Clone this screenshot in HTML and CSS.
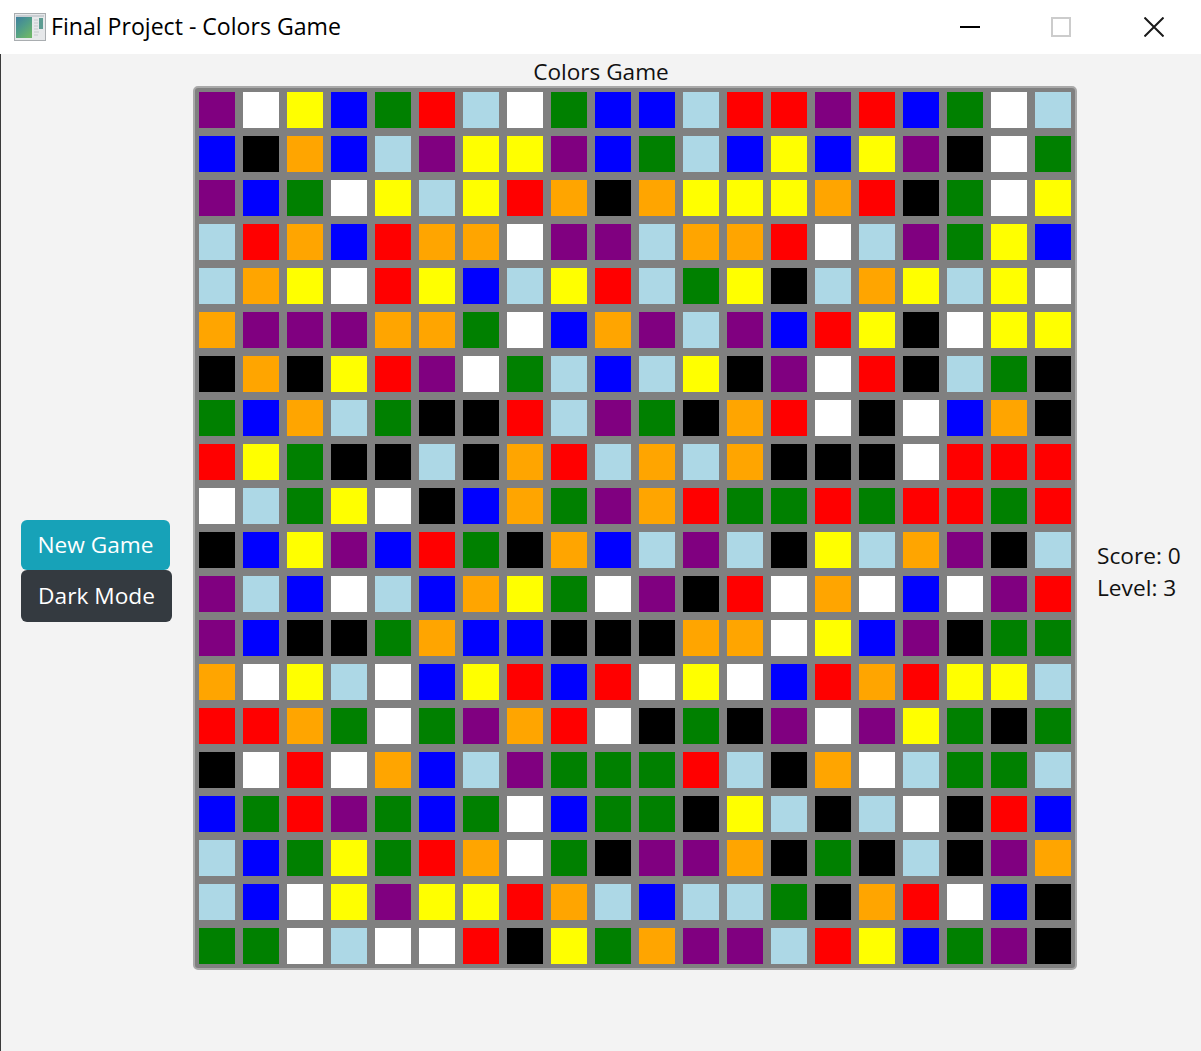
FILE: index.html
```html
<!DOCTYPE html>
<html>
<head>
    <title>Final Project - Colors Game</title>
    <link rel="stylesheet" href="styles.css">
</head>
<body>
    <div class="titlebar">
        <svg class="app-icon" width="32" height="28" viewBox="0 0 32 28">
            <rect x="0.5" y="0.5" width="31" height="27" fill="#e6e8ea" stroke="#a9adb0"/>
            <rect x="2" y="2" width="28" height="2" fill="#c9ced2"/>
            <defs>
                <linearGradient id="pane" x1="0" y1="0" x2="0.7" y2="1">
                    <stop offset="0" stop-color="#3f7f9e"/>
                    <stop offset="0.5" stop-color="#4f9c8a"/>
                    <stop offset="1" stop-color="#6cb56a"/>
                </linearGradient>
            </defs>
            <rect x="2" y="4" width="16" height="21" fill="url(#pane)"/>
            <rect x="25" y="5" width="4" height="11" fill="#5d9c92"/>
            <path d="M20 7h4M20 10h4M20 13h4M20 16h4M20 19h5M20 22h4" stroke="#c4c8cb" stroke-width="1"/>
        </svg>
        <span class="window-title">Final Project - Colors Game</span>
        <div class="window-controls">
            <svg class="ctl ctl-min" width="20" height="20" viewBox="0 0 20 20"><path d="M0 10h20" stroke="#000" stroke-width="2"/></svg>
            <svg class="ctl ctl-max" width="20" height="20" viewBox="0 0 20 20"><rect x="1" y="1" width="18" height="18" fill="none" stroke="#cccccc" stroke-width="2"/></svg>
            <svg class="ctl ctl-close" width="20" height="20" viewBox="0 0 20 20"><path d="M0.5 0.5L19.5 19.5M19.5 0.5L0.5 19.5" stroke="#1a1a1a" stroke-width="2"/></svg>
        </div>
    </div>

    <div class="content">
        <div class="game-title">Colors Game</div>
        <div class="game-row">
            <div class="side-buttons">
                <button type="button" class="btn btn-info">New Game</button>
                <button type="button" class="btn btn-dark">Dark Mode</button>
            </div>
            <div class="board" id="board"></div>
            <div class="stats">
                <div>Score: 0</div>
                <div>Level: 3</div>
            </div>
        </div>
    </div>

    <script src="board.js"></script>
</body>
</html>
```

FILE: styles.css
```css
html, body {
    margin: 0;
    padding: 0;
}

body {
    width: 1201px;
    height: 1051px;
    overflow: hidden;
    font-family: "Open Sans", "Noto Sans", sans-serif;
    color: #111;
    background-color: #f3f3f3;
}

.titlebar {
    display: flex;
    align-items: center;
    height: 54px;
    padding-left: 14px;
    background-color: #fff;
}

.app-icon {
    margin-right: 5px;
}

.window-title {
    font-size: 23.1px;
    color: #000;
    padding-bottom: 2px;
}

.window-controls {
    display: flex;
    align-items: center;
    margin-left: auto;
    margin-right: 37px;
    gap: 71px;
}

.ctl {
    display: block;
}

.ctl-close {
    margin-left: 2px;
}

.content {
    height: 997px;
    border-left: 1px solid #3a3a3a;
}

.game-title {
    height: 32px;
    line-height: 36px;
    text-align: center;
    font-size: 22.6px;
}

.game-row {
    display: flex;
    align-items: flex-start;
}

.side-buttons {
    display: flex;
    flex-direction: column;
    align-items: flex-start;
    box-sizing: border-box;
    width: 192px;
    padding-left: 20px;
    padding-top: 434px;
}

.btn {
    border: none;
    border-radius: 6px;
    color: #fff;
    font-family: inherit;
    font-size: 22.7px;
    padding: 0;
}

.btn-info {
    width: 149px;
    height: 50px;
    padding-bottom: 2px;
    background-color: #17a2b8;
}

.btn-dark {
    width: 151px;
    height: 52px;
    padding-bottom: 2px;
    background-color: #343a40;
}

.board {
    display: grid;
    grid-template-columns: repeat(20, 36px);
    grid-auto-rows: 36px;
    gap: 8px;
    padding: 4px;
    background-color: #808080;
    border: 2px solid #a9a9a9;
    border-radius: 5px;
}

.stats {
    padding-left: 20px;
    padding-top: 454px;
    font-size: 22.7px;
    line-height: 32px;
}

.c-purple { background-color: #800080; }
.c-white { background-color: #fff; }
.c-yellow { background-color: #ff0; }
.c-blue { background-color: #00f; }
.c-green { background-color: #008000; }
.c-red { background-color: #f00; }
.c-lightblue { background-color: #add8e6; }
.c-orange { background-color: #ffa500; }
.c-black { background-color: #000; }
```

FILE: board.js
```js
// one string per row, one letter per cell
var rows = [
    "PWYBGRLWGBBLRRPRBGWL",
    "BKOBLPYYPBGLBYBYPKWG",
    "PBGWYLYROKOYYYORKGWY",
    "LROBROOWPPLOORWLPGYB",
    "LOYWRYBLYRLGYKLOYLYW",
    "OPPPOOGWBOPLPBRYKWYY",
    "KOKYRPWGLBLYKPWRKLGK",
    "GBOLGKKRLPGKORWKWBOK",
    "RYGKKLKORLOLOKKKWRRR",
    "WLGYWKBOGPORGGRGRRGR",
    "KBYPBRGKOBLPLKYLOPKL",
    "PLBWLBOYGWPKRWOWBWPR",
    "PBKKGOBBKKKOOWYBPKGG",
    "OWYLWBYRBRWYWBRORYYL",
    "RROGWGPORWKGKPWPYGKG",
    "KWRWOBLPGGGRLKOWLGGL",
    "BGRPGBGWBGGKYLKLWKRB",
    "LBGYGROWGKPPOKGKLKPO",
    "LBWYPYYROLBLLGKORWBK",
    "GGWLWWRKYGOPPLRYBGPK"
];

var names = {
    P: "purple", W: "white", Y: "yellow", B: "blue", G: "green",
    R: "red", L: "lightblue", O: "orange", K: "black"
};

var board = document.getElementById("board");
for (var i = 0; i < rows.length; i++) {
    for (var j = 0; j < rows[i].length; j++) {
        var cell = document.createElement("div");
        cell.className = "c-" + names[rows[i][j]];
        board.appendChild(cell);
    }
}
```
